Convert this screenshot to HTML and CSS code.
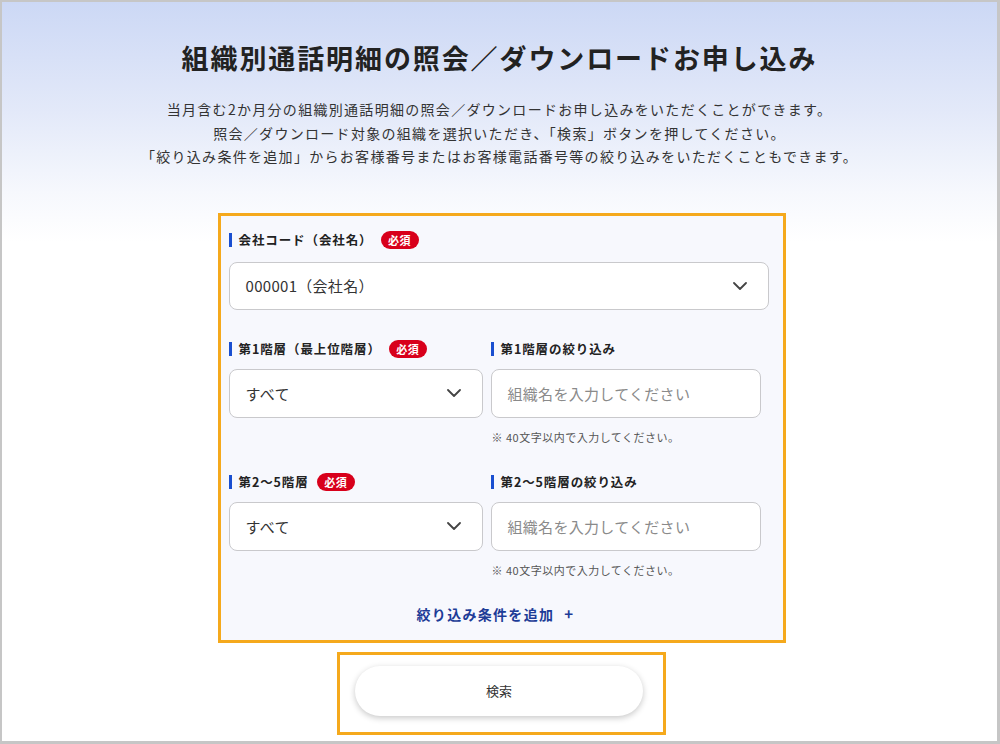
FILE: index.html
```html
<!DOCTYPE html>
<html lang="ja">
<head>
<meta charset="utf-8">
<title>組織別通話明細の照会／ダウンロードお申し込み</title>
<link rel="stylesheet" href="styles.css">
</head>
<body>
<div class="frame">
  <h1 class="title">組織別通話明細の照会／ダウンロードお申し込み</h1>
  <p class="desc">当月含む2か月分の組織別通話明細の照会／ダウンロードお申し込みをいただくことができます。<br>照会／ダウンロード対象の組織を選択いただき、「検索」ボタンを押してください。<br>「絞り込み条件を追加」からお客様番号またはお客様電話番号等の絞り込みをいただくこともできます。</p>

  <div class="wrap">
    <div class="panel">
      <div class="label"><span class="bar"></span>会社コード（会社名）<span class="badge">必須</span></div>
      <div class="select wide">000001（会社名）<svg class="chev" width="14" height="8" viewBox="0 0 14 8"><path d="M1 1l6 6 6-6" fill="none" stroke="#444" stroke-width="1.8" stroke-linecap="round" stroke-linejoin="round"/></svg></div>

      <div class="grid g1">
        <div class="cell">
          <div class="label"><span class="bar"></span>第1階層（最上位階層）<span class="badge">必須</span></div>
          <div class="select">すべて<svg class="chev" width="14" height="8" viewBox="0 0 14 8"><path d="M1 1l6 6 6-6" fill="none" stroke="#444" stroke-width="1.8" stroke-linecap="round" stroke-linejoin="round"/></svg></div>
        </div>
        <div class="cell">
          <div class="label"><span class="bar"></span>第1階層の絞り込み</div>
          <div class="input">組織名を入力してください</div>
          <div class="note">※ 40文字以内で入力してください。</div>
        </div>
      </div>

      <div class="grid g2">
        <div class="cell">
          <div class="label"><span class="bar"></span>第2〜5階層<span class="badge">必須</span></div>
          <div class="select">すべて<svg class="chev" width="14" height="8" viewBox="0 0 14 8"><path d="M1 1l6 6 6-6" fill="none" stroke="#444" stroke-width="1.8" stroke-linecap="round" stroke-linejoin="round"/></svg></div>
        </div>
        <div class="cell">
          <div class="label"><span class="bar"></span>第2〜5階層の絞り込み</div>
          <div class="input">組織名を入力してください</div>
          <div class="note">※ 40文字以内で入力してください。</div>
        </div>
      </div>

      <div class="add">絞り込み条件を追加<span class="plus">+</span></div>
    </div>

    <div class="search-box">
      <div class="btn">検索</div>
    </div>
  </div>
</div>
</body>
</html>
```
FILE: styles.css
```css
* { box-sizing: border-box; }
html, body { margin: 0; padding: 0; }
body {
  font-family: "Noto Sans CJK JP", "Noto Sans", sans-serif;
  color: #222;
}
.frame {
  width: 1000px;
  height: 744px;
  border-style: solid;
  border-color: #c6c6c6;
  border-width: 2px 3px 3px 2px;
  background: linear-gradient(180deg, #ccd8f5 0px, #e3e9f9 110px, #f6f8fd 190px, #ffffff 240px);
  overflow: hidden;
}
.title {
  margin: 36px 0 0;
  text-align: center;
  font-size: 27px;
  line-height: 40px;
  font-weight: 700;
  letter-spacing: 1.9px;
  color: #222;
}
.desc {
  margin: 20px 0 0;
  text-align: center;
  font-size: 14px;
  line-height: 23.5px;
  letter-spacing: 1.3px;
  color: #333;
}
.wrap {
  display: flex;
  flex-direction: column;
  align-items: center;
  margin-top: 44px;
  padding-left: 4px;
}
.panel {
  width: 568px;
  border: 3px solid #f5a91c;
  background: #f7f8fd;
  padding: 15px 14px 16px 8px;
}
.label {
  display: flex;
  align-items: center;
  height: 18px;
  font-size: 12.5px;
  font-weight: 700;
  color: #222;
  letter-spacing: 0.9px;
}
.bar {
  width: 3px;
  height: 14px;
  background: #1a4fd0;
  margin-right: 7px;
}
.badge {
  margin-left: 8px;
  width: 38px;
  height: 18px;
  border-radius: 9px;
  background: #d8001b;
  color: #fff;
  font-size: 11px;
  font-weight: 700;
  display: flex;
  align-items: center;
  justify-content: center;
  letter-spacing: 0.5px;
}
.select, .input {
  height: 49px;
  background: #fff;
  border: 1px solid #c9c9cc;
  border-radius: 8px;
  display: flex;
  align-items: center;
  padding-left: 16px;
  font-size: 15px;
  letter-spacing: 0.3px;
  color: #333;
  position: relative;
  margin-top: 11px;
}
.select.wide {
  height: 48px;
  margin-top: 13px;
}
.chev {
  position: absolute;
  right: 21px;
  top: 50%;
  margin-top: -4px;
}
.input { color: #8a8a8a; }
.grid {
  display: grid;
  grid-template-columns: 254px 270px;
  column-gap: 8px;
}
.g1 { margin-top: 30px; }
.g2 { margin-top: 28px; }
.note {
  margin-top: 11px;
  font-size: 11px;
  line-height: 16px;
  letter-spacing: 0.5px;
  color: #555;
  padding-left: 1px;
}
.add {
  margin-top: 26px;
  text-align: center;
  line-height: 20px;
  font-size: 14px;
  font-weight: 700;
  color: #1d3c97;
  letter-spacing: 1.3px;
  padding-right: 6px;
}
.plus {
  margin-left: 10px;
  font-weight: 700;
  font-size: 15px;
}
.search-box {
  margin-top: 9px;
  width: 329px;
  border: 3px solid #f5a91c;
  padding: 11px 0 16px 15px;
  display: flex;
  background: #fff;
}
.btn {
  width: 288px;
  height: 50px;
  border-radius: 25px;
  background: #fff;
  box-shadow: 0 2px 6px rgba(0, 0, 0, 0.22);
  display: flex;
  align-items: center;
  justify-content: center;
  font-size: 13px;
  color: #333;
}
```
